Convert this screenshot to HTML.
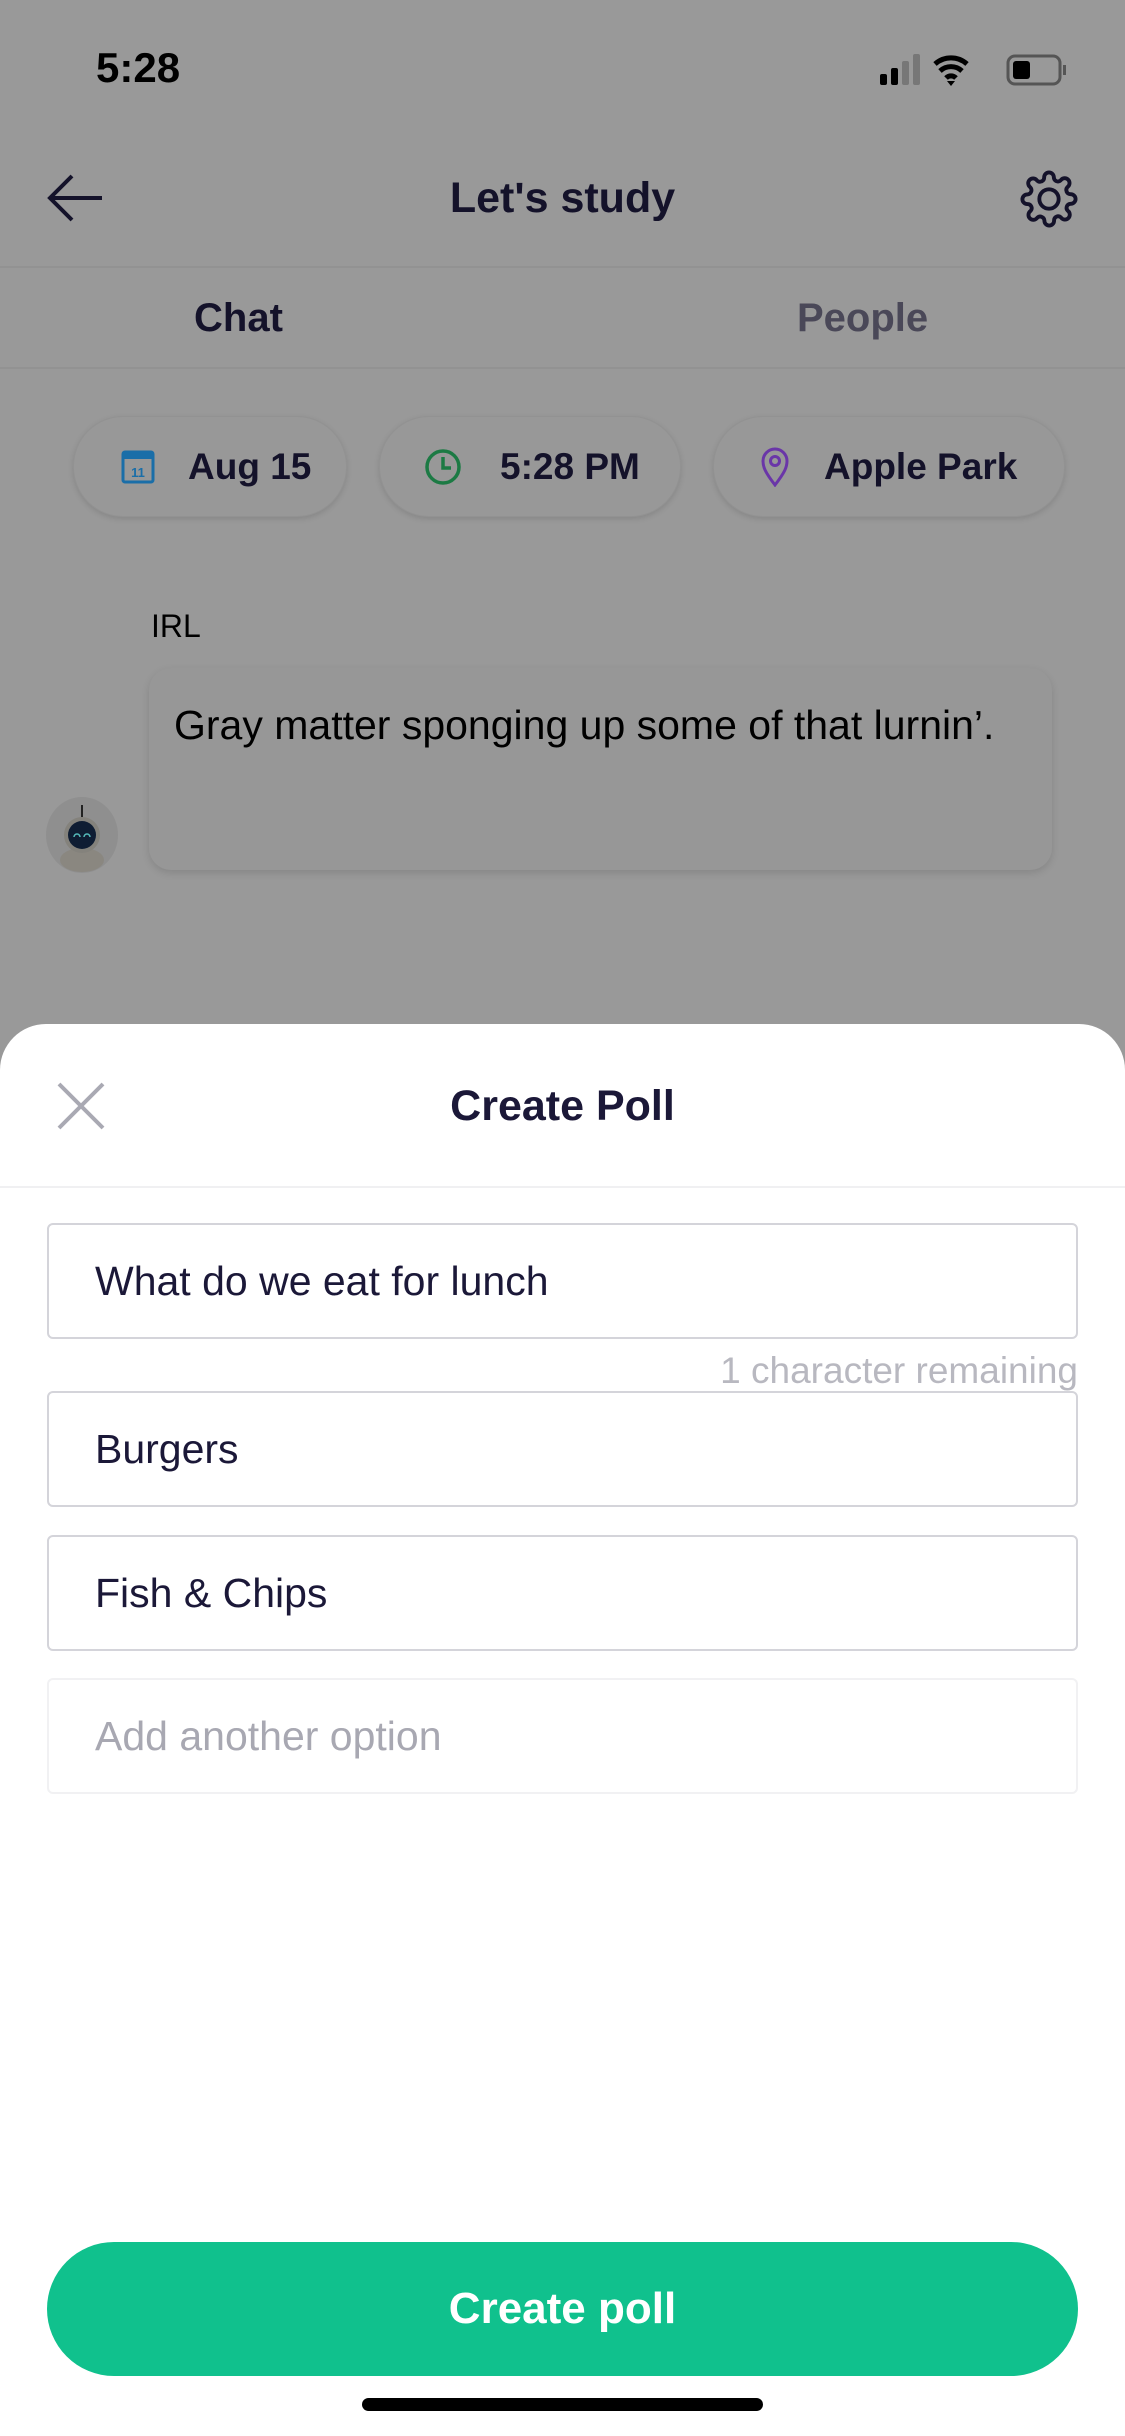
<!DOCTYPE html>
<html><head><meta charset="utf-8"><style>
*{margin:0;padding:0;box-sizing:border-box}
body{width:1125px;height:2436px;overflow:hidden;background:#999;font-family:"Liberation Sans",sans-serif;position:relative;color:#14122a}
.a{position:absolute}
.chip{position:absolute;top:416px;height:101px;border-radius:50px;background:#989898;box-shadow:0 2px 6px rgba(0,0,0,0.12);border:1px solid #929292;display:flex;align-items:center;font-weight:bold;font-size:37px;color:#14122a}
.inp{position:absolute;left:47px;width:1031px;height:116px;border:2px solid #d4d4da;border-radius:6px;background:#fff;font-size:41px;color:#1b1838;padding-left:46px;display:flex;align-items:center}
</style></head><body>
<div class="a" style="left:96px;top:44px;font-size:42px;font-weight:bold;color:#000">5:28</div>
<svg class="a" style="left:878px;top:50px" width="200" height="40" viewBox="0 0 200 40">
<rect x="2" y="24" width="7" height="11" rx="2" fill="#000"/><rect x="13" y="18" width="7" height="17" rx="2" fill="#000"/><rect x="24" y="11" width="7" height="24" rx="2" fill="#777"/><rect x="35" y="4" width="7" height="31" rx="2" fill="#777"/>
<path d="M57 14a24 24 0 0 1 32 0M62 21a16 16 0 0 1 22 0M68 28a7 7 0 0 1 10 0" stroke="#000" stroke-width="5" fill="none"/><path d="M69 31l4 5 4-5z" fill="#000"/>
<rect x="130" y="6" width="52" height="28" rx="7" stroke="#555" stroke-width="3" fill="none"/><rect x="135" y="11" width="17" height="18" rx="3" fill="#000"/><rect x="185" y="15" width="3" height="10" fill="#555"/>
</svg>
<svg class="a" style="left:46px;top:172px" width="60" height="52" viewBox="0 0 60 52"><path d="M56 26H4M26 4L4 26l22 22" stroke="#14122a" stroke-width="4" fill="none"/></svg>
<div class="a" style="left:0;width:1125px;top:174px;text-align:center;font-size:43px;font-weight:bold">Let's study</div>
<svg class="a" style="left:1020px;top:170px" width="58" height="58" viewBox="0 0 24 24"><path d="M12 8a4 4 0 1 0 0 8a4 4 0 1 0 0-8zM19.4 15a1.7 1.7 0 0 0 .3 1.8l.1.1a2 2 0 1 1-2.8 2.8l-.1-.1a1.7 1.7 0 0 0-1.8-.3 1.7 1.7 0 0 0-1 1.5V21a2 2 0 1 1-4 0v-.1a1.7 1.7 0 0 0-1.100-1.500 1.7 1.7 0 0 0-1.8.3l-.1.1a2 2 0 1 1-2.8-2.8l.1-.1a1.7 1.7 0 0 0 .3-1.8 1.7 1.7 0 0 0-1.5-1H3a2 2 0 1 1 0-4h.1a1.7 1.7 0 0 0 1.5-1.1 1.7 1.7 0 0 0-.3-1.8l-.1-.1a2 2 0 1 1 2.8-2.8l.1.1a1.7 1.7 0 0 0 1.8.3H9a1.7 1.7 0 0 0 1-1.5V3a2 2 0 1 1 4 0v.1a1.7 1.7 0 0 0 1 1.5 1.7 1.7 0 0 0 1.8-.3l.1-.1a2 2 0 1 1 2.8 2.8l-.1.1a1.7 1.7 0 0 0-.3 1.8V9a1.7 1.7 0 0 0 1.5 1H21a2 2 0 1 1 0 4h-.1a1.7 1.7 0 0 0-1.5 1z" stroke="#14122a" stroke-width="1.6" fill="none"/></svg>
<div class="a" style="left:0;top:266px;width:1125px;height:2px;background:#929292"></div>
<div class="a" style="left:194px;top:296px;font-size:40px;font-weight:bold">Chat</div>
<div class="a" style="left:797px;top:296px;font-size:40px;font-weight:bold;color:#4a4858">People</div>
<div class="a" style="left:0;top:367px;width:1125px;height:2px;background:#929292"></div>
<div class="chip" style="left:73px;width:274px"><svg style="margin-left:46px;margin-right:32px" width="36" height="36" viewBox="0 0 36 36"><rect x="3" y="3" width="30" height="30" rx="2" stroke="#1a6ea8" stroke-width="3" fill="none"/><rect x="3" y="3" width="30" height="7" fill="#1a6ea8"/><text x="18" y="28" font-size="13" text-anchor="middle" fill="#1a6ea8" font-family="Liberation Sans">11</text></svg>Aug 15</div>
<div class="chip" style="left:379px;width:302px"><svg style="margin-left:44px;margin-right:38px" width="38" height="38" viewBox="0 0 38 38"><circle cx="19" cy="19" r="16" stroke="#1c7a44" stroke-width="3.5" fill="none"/><path d="M19 9v11h8" stroke="#1c7a44" stroke-width="3.5" fill="none"/></svg>5:28 PM</div>
<div class="chip" style="left:713px;width:352px"><svg style="margin-left:46px;margin-right:34px" width="30" height="40" viewBox="0 0 30 40"><path d="M15 38C5 25 3 20 3 14a12 12 0 0 1 24 0c0 6-2 11-12 24z" stroke="#6a36a8" stroke-width="3" fill="none"/><circle cx="15" cy="14" r="4.5" stroke="#6a36a8" stroke-width="3" fill="none"/></svg>Apple Park</div>
<div class="a" style="left:151px;top:608px;font-size:32px;color:#000">IRL</div>
<div class="a" style="left:149px;top:668px;width:903px;height:202px;border-radius:22px;background:#979797;box-shadow:0 3px 8px rgba(0,0,0,0.12)"></div>
<div class="a" style="left:174px;top:702px;font-size:41px;color:#000">Gray matter sponging up some of that lurnin’.</div>
<svg class="a" style="left:45px;top:795px" width="76" height="80" viewBox="0 0 76 80"><ellipse cx="37" cy="40" rx="36" ry="38" fill="#8f8f8f"/><line x1="37" y1="10" x2="37" y2="22" stroke="#222" stroke-width="2"/><ellipse cx="37" cy="65" rx="22" ry="12" fill="#8a8780"/><circle cx="37" cy="40" r="18" fill="#84827c"/><circle cx="37" cy="40" r="14" fill="#0f1d33"/><path d="M29 42a3 3 0 0 1 6 0M39 42a3 3 0 0 1 6 0" stroke="#5bb" stroke-width="1.5" fill="none"/></svg>
<div class="a" style="left:0;top:1024px;width:1125px;height:1412px;background:#fff;border-radius:46px 46px 0 0"></div>
<svg class="a" style="left:56px;top:1081px" width="50" height="50" viewBox="0 0 50 50"><path d="M3 3l44 44M47 3L3 47" stroke="#a9a9b3" stroke-width="4"/></svg>
<div class="a" style="left:0;width:1125px;top:1082px;text-align:center;font-size:43px;font-weight:bold;color:#1b1838">Create Poll</div>
<div class="a" style="left:0;top:1186px;width:1125px;height:2px;background:#f0f0f2"></div>
<div class="inp" style="top:1223px">What do we eat for lunch</div>
<div class="a" style="right:47px;top:1350px;font-size:37px;color:#b8b8c0">1 character remaining</div>
<div class="inp" style="top:1391px">Burgers</div>
<div class="inp" style="top:1535px">Fish &amp; Chips</div>
<div class="inp" style="top:1678px;border-color:#f1f1f3;color:#a8a8b2">Add another option</div>
<div class="a" style="left:47px;top:2242px;width:1031px;height:134px;border-radius:67px;background:#10c18d;color:#fff;font-size:44px;font-weight:bold;display:flex;align-items:center;justify-content:center">Create poll</div>
<div class="a" style="left:362px;top:2398px;width:401px;height:13px;border-radius:7px;background:#000"></div>
</body></html>
